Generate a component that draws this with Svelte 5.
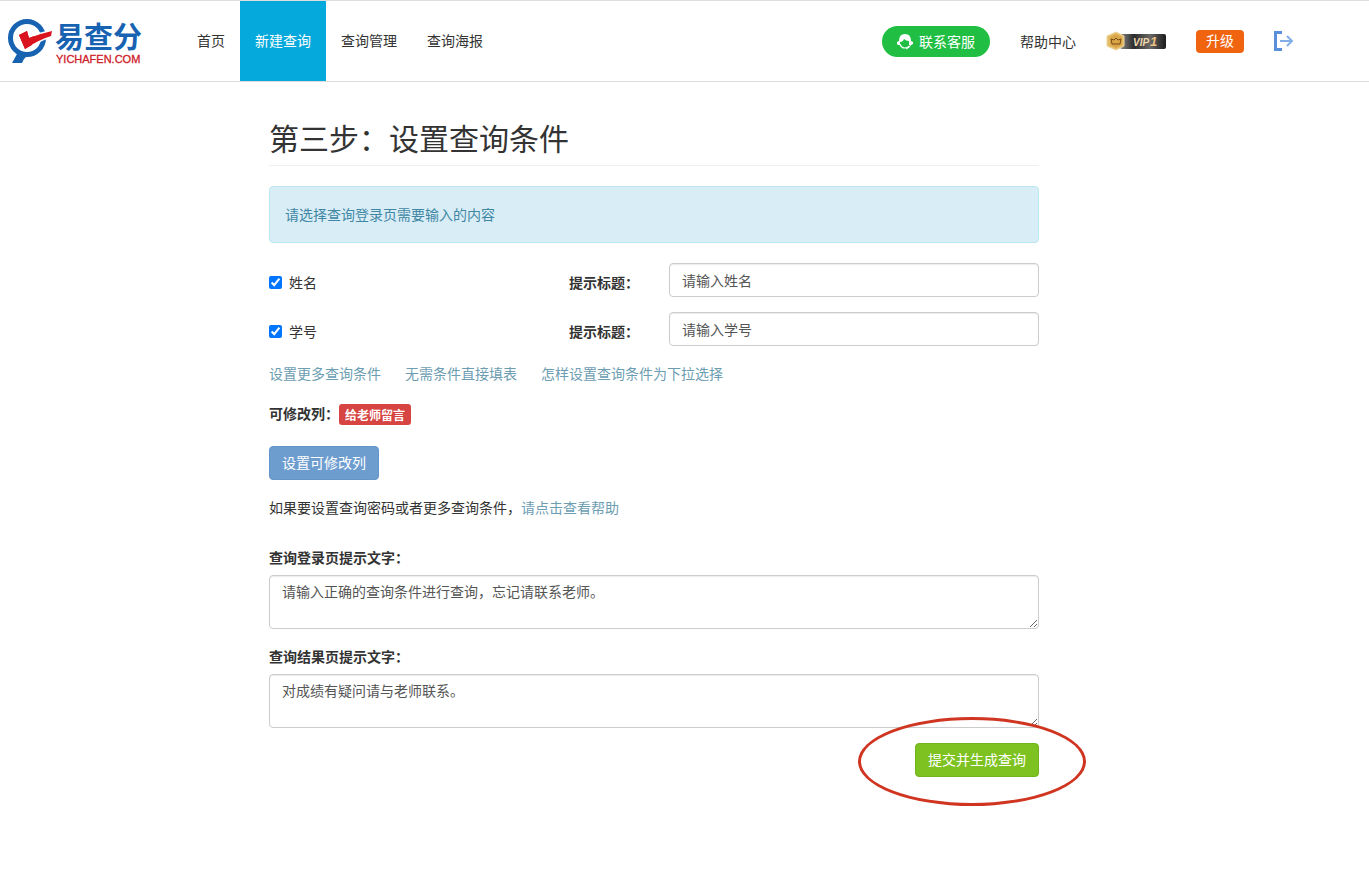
<script>
    const navItems = [
        { name: '首页', active: false },
        { name: '新建查询', active: true },
        { name: '查询管理', active: false },
        { name: '查询海报', active: false }
    ];

    const helpLinks = ['设置更多查询条件', '无需条件直接填表', '怎样设置查询条件为下拉选择'];

    let conditions = $state([
        { id: 'name', label: '姓名', checked: true, tip: '请输入姓名' },
        { id: 'number', label: '学号', checked: true, tip: '请输入学号' }
    ]);

    let loginText = $state('请输入正确的查询条件进行查询，忘记请联系老师。');
    let resultText = $state('对成绩有疑问请与老师联系。');
</script>

<header class="topbar">
    <a class="logo" href="#home" aria-label="易查分">
        <svg width="140" height="50" viewBox="0 0 140 50">
            <circle cx="19" cy="21" r="16.5" fill="none" stroke="#1763b2" stroke-width="5" />
            <path d="M8 33 L20 38 Q16 41 14 46 H4 L9 37 Z" fill="#1763b2" />
            <path d="M11 18 L19 14 L21 21 Q31 17 44 14 L43 19 Q30 23 17 32 Z" fill="#d9141e" stroke="#fff" stroke-width="3" paint-order="stroke" />
            <path d="M11 18 L19 14 L21 21 L26 19 L24 28 L17 32 Z" fill="#d9141e" />
            <text x="47" y="31" class="logo-name">易查分</text>
            <text x="48" y="46" class="logo-site">YICHAFEN.COM</text>
        </svg>
    </a>

    <nav class="menu">
        {#each navItems as item}
            <a href="#nav" class:active={item.active}>{item.name}</a>
        {/each}
    </nav>

    <div class="tools">
        <button class="service" type="button">
            <svg width="16" height="17" viewBox="0 0 16 17">
                <path d="M2 8 Q2 1 8 1 Q14 1 14 8 L16 9 V11 L14 12 H12 V8 Q9 8 7 6 Q6 9 3 9 V12 H1 L0 11 V9 Z" fill="#fff" />
                <path d="M3 11 Q4 15 8 15 Q11 15 12 13" fill="none" stroke="#fff" stroke-width="1.2" />
                <path d="M14 11 Q13 15 9 16" fill="none" stroke="#fff" />
            </svg>
            联系客服
        </button>
        <a href="#help">帮助中心</a>
        <svg class="vip" width="60" height="20" viewBox="0 0 60 20">
            <defs>
                <linearGradient id="plate" x1="0" x2="1">
                    <stop offset="0" stop-color="#8a8a8a" />
                    <stop offset="0.3" stop-color="#2b2b2b" />
                    <stop offset="0.65" stop-color="#6a6866" />
                    <stop offset="1" stop-color="#1c1c1c" />
                </linearGradient>
            </defs>
            <rect x="14" y="3" width="46" height="15" rx="2" fill="url(#plate)" />
            <path d="M10 1 L18 5 V15 L10 19 L1 15 V5 Z" fill="#e3bd68" stroke="#edd39a" />
            <path d="M10 3 L16 6 V14 L10 17 L4 14 V6 Z" fill="#d9a548" />
            <path d="M5 8 L8 9 L10 7 L12 9 L15 8 L14 13 H6 Z" fill="none" stroke="#7a4d13" />
            <text x="27" y="15" class="vip-name">VIP</text>
            <text x="44" y="15" class="vip-level">1</text>
        </svg>
        <button class="upgrade" type="button">升级</button>
        <a class="logout" href="#logout" aria-label="退出">
            <svg width="20" height="20" viewBox="0 0 20 20" fill="none">
                <path d="M8 1.5 H1.5 V18.5 H8" stroke="#5a8fdb" stroke-width="3" />
                <path d="M6 10 H18 M13 5 L18 10 L13 15" stroke="#82b0e6" stroke-width="2" />
            </svg>
        </a>
    </div>
</header>

<main>
    <div class="container">
        <h1>第三步：设置查询条件</h1>

        <div class="alert">请选择查询登录页需要输入的内容</div>

        {#each conditions as item}
            <div class="condition">
                <label class="check">
                    <input type="checkbox" bind:checked={item.checked} />
                    {item.label}
                </label>
                <label class="title" for="tip-{item.id}">提示标题：</label>
                <input id="tip-{item.id}" class="control" type="text" bind:value={item.tip} />
            </div>
        {/each}

        <div class="links">
            {#each helpLinks as link}
                <a href="#help">{link}</a>
            {/each}
        </div>

        <div class="columns">
            <strong>可修改列：</strong>
            <span class="badge">给老师留言</span>
        </div>

        <button class="btn primary" type="button">设置可修改列</button>

        <p>如果要设置查询密码或者更多查询条件，<a href="#help">请点击查看帮助</a></p>

        <div class="field">
            <label for="login-text">查询登录页提示文字：</label>
            <textarea id="login-text" class="control" rows="2" bind:value={loginText}></textarea>
        </div>

        <div class="field">
            <label for="result-text">查询结果页提示文字：</label>
            <textarea id="result-text" class="control" rows="2" bind:value={resultText}></textarea>
        </div>

        <div class="actions">
            <div class="submit">
                <button class="btn success" type="submit">提交并生成查询</button>
                <span class="ring"></span>
            </div>
        </div>
    </div>
</main>

<style>
    :global(body) {
        background: #fff;
        color: #333;
        font: 14px/20px "Noto Sans CJK SC", sans-serif;
    }

    * {
        box-sizing: border-box;
    }

    a {
        color: #6c9db1;
        text-decoration: none;
    }

    button {
        border: 0;
        font: inherit;
        color: #fff;
        cursor: pointer;
    }

    .topbar {
        display: flex;
        border-top: 1px solid #ddd;
        border-bottom: 1px solid #ddd;
        padding: 0 75px 0 8px;
    }

    .logo {
        width: 174px;
        padding-top: 16px;
    }

    .logo svg,
    .tools svg {
        display: block;
        overflow: visible;
    }

    .logo-name {
        font-size: 29px;
        font-weight: 700;
        fill: #1763b2;
    }

    .logo-site {
        font: 11px "Liberation Sans", sans-serif;
        fill: #cf2029;
        stroke: #cf2029;
        stroke-width: 0.3px;
    }

    .menu {
        display: flex;
    }

    .menu a {
        padding: 29px 15px 31px;
        color: #333;
    }

    .menu a.active {
        background: #06a9dc;
        color: #fff;
    }

    .tools {
        display: flex;
        align-items: center;
        gap: 30px;
        margin-left: auto;
    }

    .tools a {
        color: #333;
    }

    .service {
        display: flex;
        align-items: center;
        gap: 6px;
        height: 31px;
        padding: 0 15px;
        border-radius: 16px;
        background: #20bf44;
    }

    .vip-name {
        font: italic 700 10px "Liberation Sans", sans-serif;
        fill: #eed9b0;
    }

    .vip-level {
        font: italic 700 13px "Liberation Sans", sans-serif;
        fill: #e9c184;
    }

    .upgrade {
        height: 23px;
        padding: 0 10px 2px;
        border-radius: 4px;
        background: #f06410;
    }

    main {
        padding: 39px 61px 80px 0;
    }

    .container {
        max-width: 770px;
        margin: 0 auto;
    }

    h1 {
        margin: 0 0 20px;
        padding-bottom: 11px;
        border-bottom: 1px solid #eee;
        font-size: 30px;
        font-weight: 400;
        line-height: 33px;
    }

    .alert {
        margin-bottom: 20px;
        padding: 17px 15px 18px;
        border: 1px solid #bce8f1;
        border-radius: 4px;
        background: #d9edf7;
        color: #3f87a3;
    }

    .condition {
        display: grid;
        grid-template-columns: 300px 100px 1fr;
        align-items: center;
        margin-bottom: 15px;
    }

    .check {
        display: flex;
        align-items: center;
        gap: 7px;
        padding-top: 4px;
    }

    .check input {
        width: 13px;
        height: 13px;
        margin: 0;
    }

    .title {
        padding-top: 4px;
        font-weight: 700;
    }

    .control {
        display: block;
        width: 100%;
        padding: 6px 12px;
        border: 1px solid #ccc;
        border-radius: 4px;
        background: #fff;
        box-shadow: inset 0 1px 1px rgba(0, 0, 0, 0.08);
        color: #555;
        font: inherit;
    }

    input.control {
        height: 34px;
    }

    textarea.control {
        height: 54px;
        padding-top: 5px;
    }

    .links {
        display: flex;
        gap: 24px;
        margin: 17px 0 21px;
    }

    .columns {
        display: flex;
        align-items: flex-start;
        margin-bottom: 21px;
    }

    .columns strong {
        line-height: 18px;
    }

    .badge {
        padding: 0 6px;
        border-radius: 3px;
        background: #d64541;
        color: #fff;
        font-size: 12px;
        font-weight: 700;
        line-height: 21px;
    }

    .btn {
        height: 34px;
        padding: 0 12px 2px;
        border: 1px solid transparent;
        border-radius: 4px;
    }

    .primary {
        border-color: #6295c9;
        background: #6d9dcf;
    }

    .success {
        border-color: #70b41c;
        background: #7dc221;
    }

    p {
        margin: 17px 0 30px;
    }

    .field + .field {
        margin-top: 17px;
    }

    .field label {
        display: block;
        margin-bottom: 8px;
        font-weight: 700;
    }

    .actions {
        display: flex;
        justify-content: flex-end;
        margin-top: 15px;
    }

    .submit {
        position: relative;
    }

    /* red ring drawn over the submit button */
    .ring {
        position: absolute;
        inset: -26px -47px -29px -57px;
        border: 3px solid #cf3520;
        border-radius: 50%;
        pointer-events: none;
    }
</style>
